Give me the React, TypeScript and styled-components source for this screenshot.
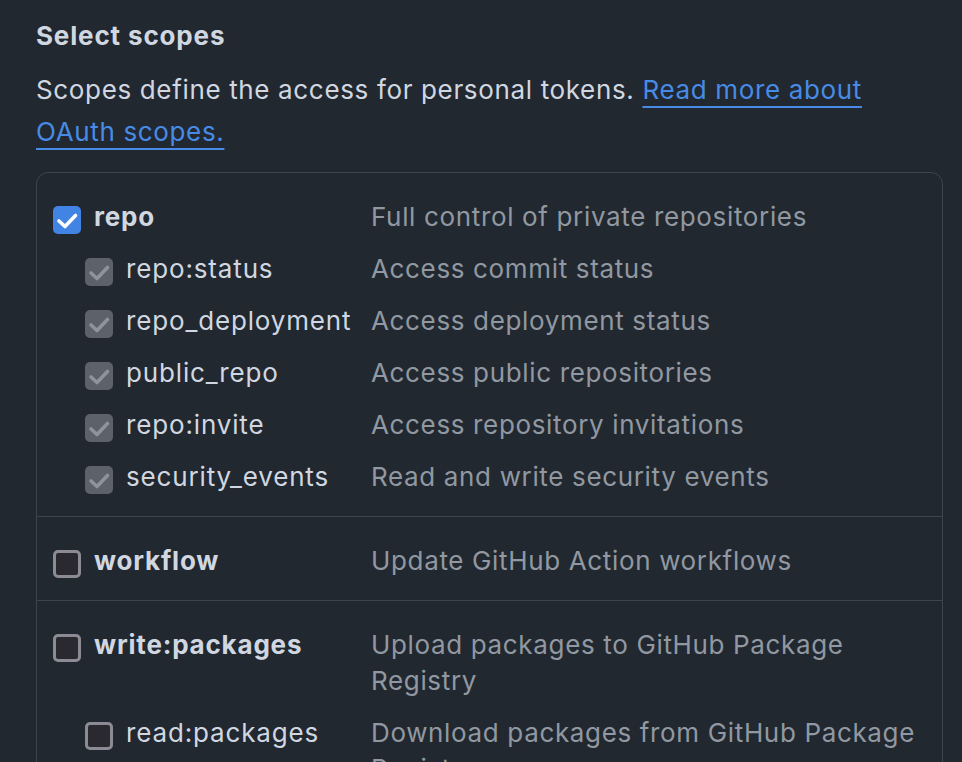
import React from "react";
import styled, { createGlobalStyle } from "styled-components";

const GlobalStyle = createGlobalStyle`
  html, body {
    margin: 0;
    padding: 0;
    overflow: hidden;
    background: #212830;
  }
  body {
    font-family: Inter, "Noto Sans", "Liberation Sans", sans-serif;
    -webkit-font-smoothing: antialiased;
    letter-spacing: 0.65px;
  }
`;

const Page = styled.div`
  padding: 16px 19px 40px 36px;
  color: #d1d7e0;
`;

const Heading = styled.h3`
  margin: 0;
  font-size: 26px;
  line-height: 39px;
  font-weight: 700;
  letter-spacing: 0.85px;
  color: #d1d7e0;
`;

const Intro = styled.p`
  margin: 14px 0 19px;
  font-size: 26px;
  line-height: 42px;
  color: #d1d7e0;
`;

const Link = styled.a`
  color: #478be6;
  text-decoration: underline;
  text-decoration-thickness: 2px;
  text-underline-offset: 7px;
`;

const ScopeBox = styled.div`
  border: 1px solid #3d444d;
  border-radius: 12px;
`;

const Group = styled.div`
  display: flex;
  flex-direction: column;
  gap: 16px;
  padding: 26px 16px 21px;
  & + & {
    border-top: 1px solid #3d444d;
  }
`;

const Row = styled.div`
  display: grid;
  grid-template-columns: 318px 1fr;
  font-size: 26px;
  line-height: 36px;
`;

const LabelCell = styled.label<{ $child?: boolean }>`
  display: flex;
  align-items: flex-start;
  gap: 13px;
  padding-left: ${(p) => (p.$child ? "32px" : "0")};
  white-space: nowrap;
`;

type BoxState = "checked" | "disabled" | "empty";

const Box = styled.span<{ $state: BoxState }>`
  flex: none;
  box-sizing: border-box;
  width: 28px;
  height: 28px;
  margin-top: 7px;
  border-radius: 5px;
  display: flex;
  align-items: center;
  justify-content: center;
  background: ${(p) =>
    p.$state === "checked" ? "#4184e4" : p.$state === "disabled" ? "#5c616a" : "#2b2930"};
  border: ${(p) => (p.$state === "empty" ? "3px solid #8c8b94" : "none")};
`;

const Name = styled.span<{ $bold?: boolean }>`
  font-weight: ${(p) => (p.$bold ? 700 : 400)};
  letter-spacing: ${(p) => (p.$bold ? "0.8px" : "0.85px")};
  color: #d1d7e0;
`;

const Desc = styled.span`
  color: #9198a1;
`;

const CheckBox: React.FC<{ state: BoxState }> = ({ state }) => (
  <Box $state={state}>
    {state !== "empty" && (
      <svg width="28" height="28" viewBox="0 0 28 28" fill="none">
        <path
          d="M6 15 L12 20.5 L22.5 9.5"
          stroke={state === "checked" ? "#ffffff" : "#8f949c"}
          strokeWidth="3.6"
          strokeLinecap="round"
          strokeLinejoin="round"
        />
      </svg>
    )}
  </Box>
);

type Scope = { name: string; desc: string; child?: boolean; state: BoxState };

const groups: Scope[][] = [
  [
    { name: "repo", desc: "Full control of private repositories", state: "checked" },
    { name: "repo:status", desc: "Access commit status", child: true, state: "disabled" },
    { name: "repo_deployment", desc: "Access deployment status", child: true, state: "disabled" },
    { name: "public_repo", desc: "Access public repositories", child: true, state: "disabled" },
    { name: "repo:invite", desc: "Access repository invitations", child: true, state: "disabled" },
    { name: "security_events", desc: "Read and write security events", child: true, state: "disabled" },
  ],
  [{ name: "workflow", desc: "Update GitHub Action workflows", state: "empty" }],
  [
    { name: "write:packages", desc: "Upload packages to GitHub Package Registry", state: "empty" },
    { name: "read:packages", desc: "Download packages from GitHub Package Registry", child: true, state: "empty" },
  ],
  [
    { name: "delete:packages", desc: "Delete packages from GitHub Package Registry", state: "empty" },
  ],
];

export default function App() {
  return (
    <>
      <GlobalStyle />
      <Page>
        <Heading>Select scopes</Heading>
        <Intro>
          Scopes define the access for personal tokens.{" "}
          <Link href="#">Read more about OAuth scopes.</Link>
        </Intro>
        <ScopeBox>
          {groups.map((g, i) => (
            <Group key={i}>
              {g.map((s) => (
                <Row key={s.name}>
                  <LabelCell $child={s.child}>
                    <CheckBox state={s.state} />
                    <Name $bold={!s.child}>{s.name}</Name>
                  </LabelCell>
                  <Desc>{s.desc}</Desc>
                </Row>
              ))}
            </Group>
          ))}
        </ScopeBox>
      </Page>
    </>
  );
}
